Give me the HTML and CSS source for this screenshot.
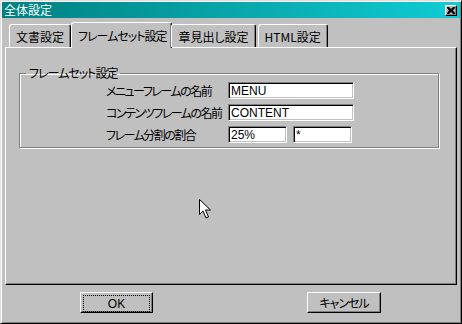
FILE: index.html
```html
<!DOCTYPE html>
<html lang="ja">
  <head>
    <meta charset="UTF-8" />
    <title>全体設定</title>
    <link rel="stylesheet" href="styles.css">
  </head>
  <body>
    <div class="window">
      <div class="titlebar">
        <span class="title">全体設定</span>
        <span class="close">
          <svg width="8" height="7" viewBox="0 0 8 7">
            <path d="M0 0h2l2 2 2-2h2v1L6 3.5 8 6v1H6L4 5 2 7H0V6l2-2.5L0 1z" fill="#000" />
          </svg>
        </span>
      </div>
      <div class="content">
        <div class="tabs">
          <div class="tab">文書設定</div>
          <div class="tab active">フレームセット設定</div>
          <div class="tab">章見出し設定</div>
          <div class="tab">HTML設定</div>
        </div>
        <div class="panel">
          <fieldset class="group">
            <legend>フレームセット設定</legend>
            <div class="form">
              <label>メニューフレームの名前</label>
              <div class="field"><input class="wide" type="text" value="MENU" /></div>
              <label>コンテンツフレームの名前</label>
              <div class="field"><input class="wide" type="text" value="CONTENT" /></div>
              <label>フレーム分割の割合</label>
              <div class="field">
                <input class="narrow" type="text" value="25%" />
                <input class="narrow" type="text" value="*" />
              </div>
            </div>
          </fieldset>
        </div>
        <div class="buttons">
          <button class="default"><span class="focus">OK</span></button>
          <button>キャンセル</button>
        </div>
      </div>
      <svg class="cursor" width="13" height="21" viewBox="0 0 13 21">
        <path d="M0.5 0.5v15l3.5-3.5 3 7 2.5-1-3-7h5z" fill="#fff" stroke="#000" stroke-width="1" />
      </svg>
    </div>
  </body>
</html>
```

FILE: styles.css
```css
body {
  margin: 0;
  font-family: "Noto Sans CJK JP", "Liberation Sans", sans-serif;
  font-size: 12px;
  font-feature-settings: "palt";
}
.window {
  position: relative;
  width: 462px;
  height: 324px;
  box-sizing: border-box;
  background: #c0c0c0;
  border-top: 1px solid #dfdfdf;
  border-left: 1px solid #dfdfdf;
  border-right: 1px solid #000;
  border-bottom: 1px solid #000;
  box-shadow: inset 1px 1px 0 #fff, inset -1px -1px 0 #808080;
  padding: 1px;
  overflow: hidden;
}
.titlebar {
  height: 16px;
  background: linear-gradient(to right, #008080, #10ccd4);
  display: flex;
  align-items: center;
  justify-content: space-between;
  padding: 0 3px 0 2px;
  color: #fff;
}
.title {
  line-height: 16px;
}
.close {
  width: 12px;
  height: 11px;
  box-sizing: border-box;
  background: #c0c0c0;
  border-top: 1px solid #fff;
  border-left: 1px solid #fff;
  border-right: 1px solid #000;
  border-bottom: 1px solid #000;
  box-shadow: inset -1px -1px 0 #808080;
  display: flex;
  align-items: center;
  justify-content: center;
}
.content {
  padding: 3px 3px 0 3px;
}
.tabs {
  display: flex;
  align-items: flex-end;
  height: 26px;
  padding-left: 4px;
  position: relative;
  z-index: 1;
}
.tab {
  height: 23px;
  box-sizing: border-box;
  padding: 0 6px;
  border-top: 1px solid #fff;
  border-left: 1px solid #fff;
  border-right: 1px solid #000;
  border-radius: 3px 3px 0 0;
  box-shadow: inset -1px 0 0 #808080;
  display: flex;
  align-items: center;
  margin-right: 2px;
}
.tab.active {
  height: 26px;
  margin: 0 0 -1px -2px;
  padding: 0 5px 1px 6px;
  background: #c0c0c0;
  letter-spacing: -1px;
}
.tab.active + .tab {
  margin-left: -1px;
}
.panel {
  height: 238px;
  box-sizing: border-box;
  border-top: 1px solid #fff;
  border-left: 1px solid #fff;
  border-right: 1px solid #000;
  border-bottom: 1px solid #000;
  box-shadow: inset -1px -1px 0 #808080;
  padding: 18px 0 0 13px;
}
.group {
  width: 420px;
  box-sizing: border-box;
  margin: 0;
  padding: 2px 0 4px 86px;
  border: 1px solid #808080;
  box-shadow: 1px 1px 0 #fff, inset 1px 1px 0 #fff;
}
.group legend {
  padding: 0 3px;
  margin-left: -80px;
  line-height: 14px;
  letter-spacing: -1px;
}
.form {
  display: grid;
  grid-template-columns: 122px auto;
  row-gap: 5px;
  align-items: center;
}
.form label {
  line-height: 17px;
  letter-spacing: -1.5px;
  white-space: nowrap;
}
.field {
  display: flex;
  gap: 6px;
  height: 17px;
}
input {
  height: 17px;
  box-sizing: border-box;
  margin: 0;
  padding: 0 2px;
  font-family: "Liberation Sans", sans-serif;
  font-size: 12px;
  background: #fff;
  border-top: 1px solid #808080;
  border-left: 1px solid #808080;
  border-right: 1px solid #fff;
  border-bottom: 1px solid #fff;
  box-shadow: inset 1px 1px 0 #000, inset -1px -1px 0 #c0c0c0;
  outline: none;
}
.wide {
  width: 126px;
}
.narrow {
  width: 59px;
}
.buttons {
  display: flex;
  gap: 154px;
  padding: 7px 0 0 75px;
}
button {
  flex: none;
  width: 74px;
  height: 21px;
  box-sizing: border-box;
  margin: 0;
  padding: 0;
  font-family: "Noto Sans CJK JP", "Liberation Sans", sans-serif;
  font-feature-settings: "palt";
  font-size: 12px;
  letter-spacing: -1px;
  color: #000;
  background: #c0c0c0;
  border-top: 1px solid #fff;
  border-left: 1px solid #fff;
  border-right: 1px solid #000;
  border-bottom: 1px solid #000;
  box-shadow: inset -1px -1px 0 #808080;
}
button.default {
  width: 73px;
}
.focus {
  display: flex;
  align-items: center;
  justify-content: center;
  margin: 2px;
  height: 15px;
  border: 1px dotted #000;
  font-family: "Liberation Sans", sans-serif;
  letter-spacing: 0;
}
.cursor {
  position: absolute;
  left: 198px;
  top: 198px;
}
```
